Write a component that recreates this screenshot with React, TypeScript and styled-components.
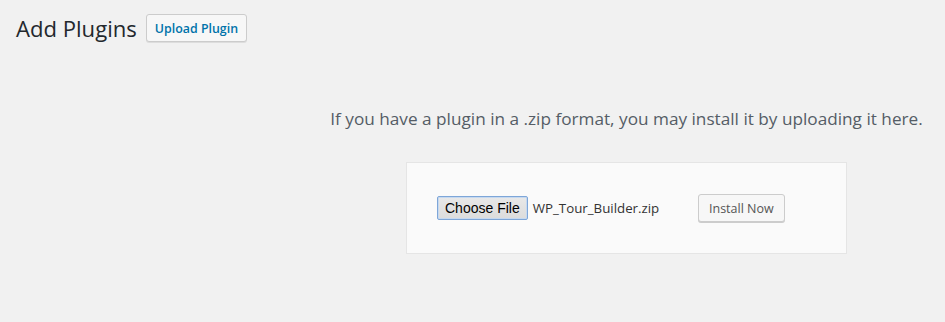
import React from 'react';
import styled, { createGlobalStyle } from 'styled-components';

const GlobalStyle = createGlobalStyle`
  html, body {
    margin: 0;
    padding: 0;
    background: #f1f1f1;
  }
  body {
    font-family: 'Open Sans', 'Noto Sans', Arial, sans-serif;
    color: #444;
  }
`;

const Page = styled.div`
  width: 945px;
  height: 322px;
  overflow: hidden;
  background: #f1f1f1;
`;

const Header = styled.div`
  display: flex;
  align-items: center;
  gap: 9px;
  padding: 14px 0 0 16px;
`;

const Title = styled.h1`
  margin: 0;
  font-size: 22.1px;
  font-weight: 400;
  color: #23282d;
  line-height: 28px;
`;

const SmallButton = styled.button`
  height: 28px;
  padding: 0 8px;
  font-family: inherit;
  font-size: 12.4px;
  font-weight: 600;
  color: #0073aa;
  background: #f7f7f7;
  border: 1px solid #ccc;
  border-radius: 3px;
  box-shadow: 0 1px 0 #ddd;
`;

const UploadWrap = styled.div`
  margin: 65px 0 0 308px;
  width: 637px;
  display: flex;
  flex-direction: column;
  align-items: center;
`;

const Instructions = styled.p`
  margin: 0;
  font-size: 17.2px;
  line-height: 24px;
  color: #555d66;
  white-space: nowrap;
`;

const UploadBox = styled.form`
  margin-top: 31px;
  width: 441px;
  height: 92px;
  box-sizing: border-box;
  background: #fafafa;
  border: 1px solid #e5e5e5;
  display: flex;
  align-items: center;
  padding: 0 0 0 30px;
`;

const FilePicker = styled.div`
  display: flex;
  align-items: center;
  gap: 5px;
  width: 261px;
`;

const ChooseButton = styled.button`
  height: 24px;
  padding: 0 7px;
  font-family: 'Liberation Sans', Arial, sans-serif;
  font-size: 14px;
  color: #000;
  background: linear-gradient(#e8e8e8, #dcdcdc);
  border: 1px solid #7ea6d8;
  border-radius: 2px;
  box-shadow: 0 0 0 1px #c6d9f0 inset;
`;

const FileName = styled.span`
  font-size: 13.3px;
  color: #333;
`;

const InstallButton = styled.button`
  height: 28px;
  padding: 0 10px;
  font-family: inherit;
  font-size: 12.5px;
  color: #555;
  background: #f7f7f7;
  border: 1px solid #ccc;
  border-radius: 3px;
  box-shadow: 0 1px 0 #ccc;
`;

export default function App() {
  return (
    <Page>
      <GlobalStyle />
      <Header>
        <Title>Add Plugins</Title>
        <SmallButton>Upload Plugin</SmallButton>
      </Header>
      <UploadWrap>
        <Instructions>
          If you have a plugin in a .zip format, you may install it by uploading it here.
        </Instructions>
        <UploadBox onSubmit={(e) => e.preventDefault()}>
          <FilePicker>
            <ChooseButton type="button">Choose File</ChooseButton>
            <FileName>WP_Tour_Builder.zip</FileName>
          </FilePicker>
          <InstallButton type="submit">Install Now</InstallButton>
        </UploadBox>
      </UploadWrap>
    </Page>
  );
}
